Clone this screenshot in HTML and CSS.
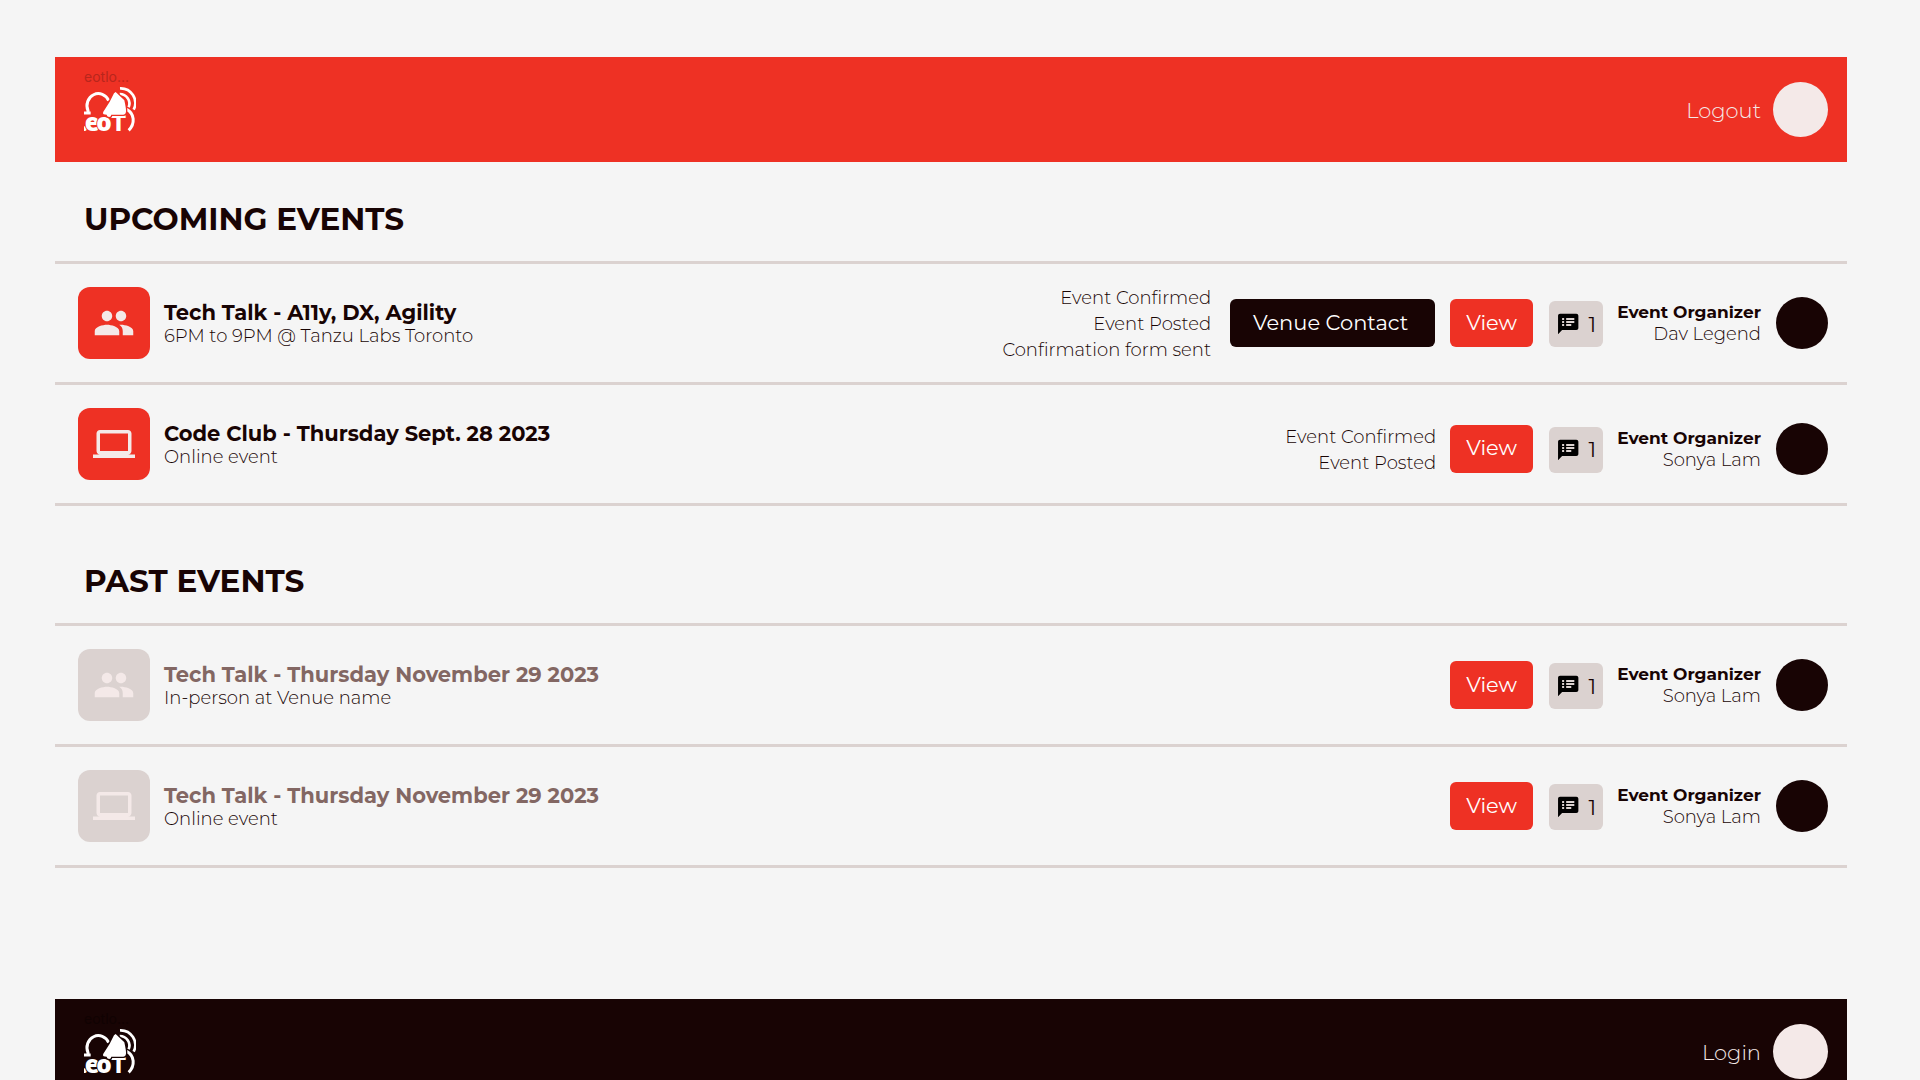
FILE: index.html
```html
<!DOCTYPE html>
<html lang="en">
<head>
<meta charset="utf-8">
<meta name="viewport" content="width=device-width, initial-scale=1">
<title>Events</title>
<link rel="stylesheet" href="styles.css">
</head>
<body>
<svg class="sprite" aria-hidden="true">
  <symbol id="people" viewBox="0 0 24 24"><path d="M16 11c1.660 0 2.990-1.340 2.990-3S17.660 5 16 5s-3 1.340-3 3 1.340 3 3 3zm-8 0c1.660 0 2.990-1.340 2.990-3S9.660 5 8 5 5 6.340 5 8s1.340 3 3 3zm0 2c-2.330 0-7 1.170-7 3.500V19h14v-2.500c0-2.330-4.670-3.500-7-3.500zm8 0c-.29 0-.62.02-.97.05 1.160.84 1.970 1.970 1.970 3.450V19h6v-2.500c0-2.330-4.670-3.500-7-3.500z"/></symbol>
  <symbol id="laptop" viewBox="0 0 24 24"><path d="M20 18c1.100 0 1.990-.9 1.990-2L22 6c0-1.100-.9-2-2-2H4c-1.100 0-2 .9-2 2v10c0 1.100.9 2 2 2H0v2h24v-2h-4zM4 6h16v10H4V6z"/></symbol>
  <symbol id="notes" viewBox="0 0 24 24"><path d="M20 2H4c-1.100 0-1.990.9-1.990 2L2 22l4-4h14c1.100 0 2-.9 2-2V4c0-1.100-.9-2-2-2zM8 14H6v-2h2v2zm0-3H6V9h2v2zm0-3H6V6h2v2zm7 6h-5v-2h5v2zm3-3h-8V9h8v2zm0-3h-8V6h8v2z"/></symbol>
  <symbol id="logo" viewBox="102 108 156 141">
    <g fill="none" stroke="#fff" stroke-width="9">
      <path d="M114 190V182A34 36 0 0 1 176 152"/>
      <path d="M102 189H122"/>
      <path d="M210 115A44 44 0 0 1 251 179" stroke-width="8"/>
      <path d="M209 132A29 29 0 0 1 236 172" stroke-width="8"/>
      <path d="M230 178C254 190 256 222 236 241"/>
    </g>
    <text class="logo-text" y="243"><tspan x="92">.</tspan><tspan x="104 139">eo</tspan><tspan class="logo-cap" x="184">T</tspan></text>
    <path class="logo-bell" d="M197 126L223 151Q229 178 228 186Q227 194 220 194H184Q182 204 172 199L170 194L161 193Q157 190 160 185Q180 158 192 130Z"/>
  </symbol>
</svg>

<header class="bar bar-red">
  <a class="brand" href="#"><span class="brand-name">eotlo...</span><svg class="logo"><use href="#logo"/></svg></a>
  <a class="account" href="#"><span class="account-label">Logout</span><span class="avatar avatar-light"></span></a>
</header>

<main>
  <section class="events">
    <h1>UPCOMING EVENTS</h1>
    <ul>
      <li class="event">
        <span class="tile"><svg class="tile-icon"><use href="#people"/></svg></span>
        <div class="info"><h2>Tech Talk - A11y, DX, Agility</h2><p>6PM to 9PM @ Tanzu Labs Toronto</p></div>
        <div class="actions">
          <p class="status status-wide">Event Confirmed<br>Event Posted<br>Confirmation form sent</p>
          <button class="btn btn-dark">Venue Contact</button>
          <button class="btn">View</button>
          <button class="count"><svg class="count-icon"><use href="#notes"/></svg>1</button>
          <div class="organizer"><h3>Event Organizer</h3><p>Dav Legend</p></div>
          <span class="avatar"></span>
        </div>
      </li>
      <li class="event">
        <span class="tile"><svg class="tile-icon"><use href="#laptop"/></svg></span>
        <div class="info"><h2>Code Club - Thursday Sept. 28 2023</h2><p>Online event</p></div>
        <div class="actions actions-low">
          <p class="status">Event Confirmed<br>Event Posted</p>
          <button class="btn">View</button>
          <button class="count"><svg class="count-icon"><use href="#notes"/></svg>1</button>
          <div class="organizer"><h3>Event Organizer</h3><p>Sonya Lam</p></div>
          <span class="avatar"></span>
        </div>
      </li>
    </ul>
  </section>

  <section class="events past">
    <h1>PAST EVENTS</h1>
    <ul>
      <li class="event">
        <span class="tile"><svg class="tile-icon"><use href="#people"/></svg></span>
        <div class="info"><h2>Tech Talk - Thursday November 29 2023</h2><p>In-person at Venue name</p></div>
        <div class="actions">
          <button class="btn">View</button>
          <button class="count"><svg class="count-icon"><use href="#notes"/></svg>1</button>
          <div class="organizer"><h3>Event Organizer</h3><p>Sonya Lam</p></div>
          <span class="avatar"></span>
        </div>
      </li>
      <li class="event">
        <span class="tile"><svg class="tile-icon"><use href="#laptop"/></svg></span>
        <div class="info"><h2>Tech Talk - Thursday November 29 2023</h2><p>Online event</p></div>
        <div class="actions">
          <button class="btn">View</button>
          <button class="count"><svg class="count-icon"><use href="#notes"/></svg>1</button>
          <div class="organizer"><h3>Event Organizer</h3><p>Sonya Lam</p></div>
          <span class="avatar"></span>
        </div>
      </li>
    </ul>
  </section>
</main>

<div class="bar bar-dark">
  <a class="brand" href="#"><span class="brand-name">eotlo...</span><svg class="logo"><use href="#logo"/></svg></a>
  <a class="account" href="#"><span class="account-label">Login</span><span class="avatar avatar-light"></span></a>
</div>
</body>
</html>
```
FILE: styles.css
```css
:root {
  --red: #ee3124;
  --ink: #180404;
  --line: #dbd2d0;
  --pale: #f4e9e8;
  --muted: #836763;
}
* { box-sizing: border-box; }
html { overflow: hidden; }
body {
  margin: 0;
  padding: 57px 73px 0 55px;
  height: 100vh;
  overflow: hidden;
  background: #f5f5f5;
  color: var(--ink);
  font-family: Montserrat, Inter, sans-serif;
}
h1, h2, h3, p, ul { margin: 0; padding: 0; }
ul { list-style: none; }
a { color: inherit; text-decoration: none; }
button { border: 0; font: inherit; }
.sprite { display: none; }

.bar {
  display: flex;
  justify-content: space-between;
  align-items: center;
  height: 105px;
  padding: 0 19px 0 29px;
  color: var(--pale);
}
.bar-red { --bar: var(--red); background: var(--red); }
.bar-dark { --bar: var(--ink); background: var(--ink); margin-top: 131px; }
.brand { display: flex; flex-direction: column; padding-bottom: 18px; }
.brand-name { font: 14px/16px Inter, sans-serif; color: #b8261c; }
.bar-dark .brand-name { color: #100202; }
.logo { width: 52px; height: 47px; margin-top: 1px; }
.logo-text {
  font: 800 73px "Open Sans", sans-serif;
  fill: #fff;
  stroke: var(--bar);
  stroke-width: 5px;
  paint-order: stroke;
}
.logo-cap { font: bold 64px "DejaVu Sans", sans-serif; }
.logo-bell {
  fill: #fff;
  stroke: var(--bar);
  stroke-width: 8px;
  paint-order: stroke;
}
.account { display: flex; align-items: center; gap: 12px; font-size: 21px; font-weight: 300; }
.account-label { padding-top: 2px; }

.avatar { width: 52px; height: 52px; border-radius: 50%; background: var(--ink); }
.avatar-light { width: 55px; height: 55px; background: var(--pale); }

.events h1 {
  padding: 37px 29px 22px;
  font-size: 31px;
  line-height: 40px;
  font-weight: 700;
}
.events.past h1 { padding-top: 55px; }
.events ul { border-top: 3px solid var(--line); }
.event {
  display: flex;
  align-items: center;
  height: 121px;
  padding: 0 19px 0 23px;
  border-bottom: 3px solid var(--line);
}
.tile {
  display: grid;
  place-items: center;
  width: 72px;
  height: 72px;
  border-radius: 12px;
  background: var(--red);
}
.tile-icon { width: 42px; height: 42px; fill: var(--pale); }
.past .tile { background: var(--line); }
.info { flex: 1; padding: 2px 0 0 14px; }
.info h2 { font-size: 21px; line-height: 24px; font-weight: 700; }
.past .info h2 { color: var(--muted); }
.info p { font-size: 18px; line-height: 22px; font-weight: 300; }

.actions { display: flex; align-items: center; }
.actions-low { padding-top: 9px; }
.status { margin-right: 14px; padding-top: 2px; font-size: 18px; line-height: 26px; font-weight: 300; text-align: right; }
.status-wide { margin-right: 19px; }
.btn {
  height: 48px;
  width: 83px;
  margin-right: 16px;
  padding: 0 0 2px;
  border-radius: 6px;
  background: var(--red);
  color: #fff;
  font-size: 21px;
  font-weight: 400;
}
.btn-dark { width: 205px; margin-right: 15px; padding-right: 4px; background: var(--ink); }
.count {
  display: flex;
  align-items: center;
  gap: 8px;
  width: 54px;
  height: 46px;
  margin: 2px 14px 0 0;
  padding: 0 7px;
  border-radius: 6px;
  background: var(--line);
  color: var(--ink);
  font-size: 21px;
  font-weight: 400;
}
.count-icon { width: 26px; height: 26px; fill: #000; }
.organizer { margin-right: 15px; text-align: right; }
.organizer h3 { font-size: 17px; line-height: 22px; font-weight: 700; }
.organizer p { font-size: 18px; line-height: 22px; font-weight: 300; }
```
